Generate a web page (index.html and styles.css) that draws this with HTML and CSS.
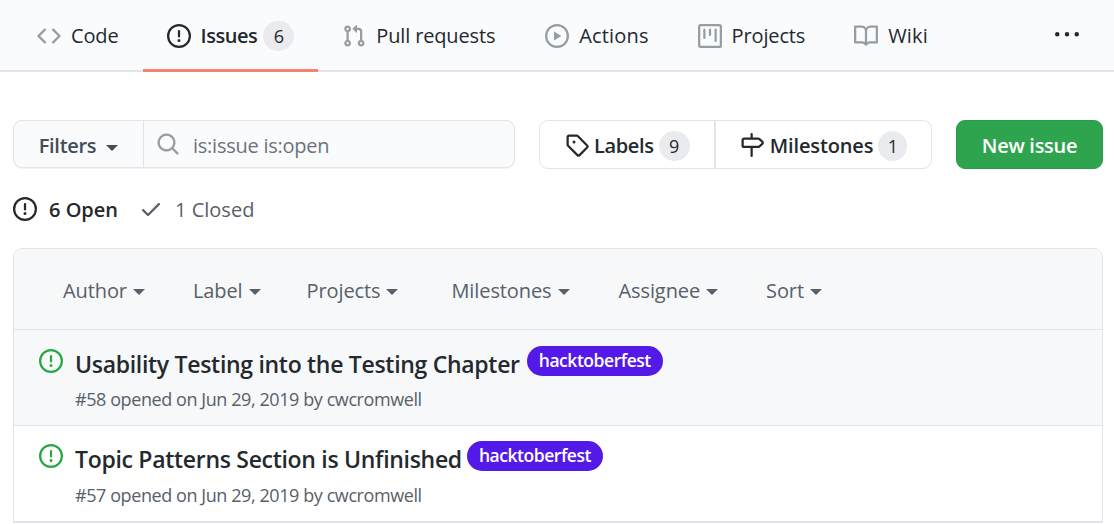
FILE: index.html
```html
<!DOCTYPE html>
<html lang="en">
<head>
    <meta charset="UTF-8">
    <meta name="viewport" content="width=device-width, initial-scale=1.0">
    <title>Issues</title>
    <link rel="stylesheet" href="styles.css">
</head>
<body>
    <svg class="sprite" width="0" height="0">
        <symbol id="i-code" viewBox="0 0 16 16"><path d="M4.72 3.22a.75.75 0 011.06 1.06L2.06 8l3.72 3.72a.75.75 0 11-1.06 1.06L.47 8.53a.75.75 0 010-1.06l4.25-4.25zm6.56 0a.75.75 0 10-1.06 1.06L13.94 8l-3.72 3.72a.75.75 0 101.06 1.06l4.25-4.25a.75.75 0 000-1.06l-4.25-4.25z"/></symbol>
        <symbol id="i-issue" viewBox="0 0 16 16"><path d="M8 1.5a6.5 6.5 0 100 13 6.5 6.5 0 000-13zM0 8a8 8 0 1116 0A8 8 0 010 8zm9 3a1 1 0 11-2 0 1 1 0 012 0zm-.25-6.25a.75.75 0 00-1.5 0v3.5a.75.75 0 001.5 0v-3.5z"/></symbol>
        <symbol id="i-pull" viewBox="0 0 16 16"><path d="M7.177 3.073L9.573.677A.25.25 0 0110 .854v4.792a.25.25 0 01-.427.177L7.177 3.427a.25.25 0 010-.354zM3.75 2.5a.75.75 0 100 1.5.75.75 0 000-1.5zm-2.25.75a2.25 2.25 0 113 2.122v5.256a2.251 2.251 0 11-1.5 0V5.372A2.25 2.25 0 011.5 3.25zM11 2.5h-1V4h1a1 1 0 011 1v5.628a2.251 2.251 0 101.5 0V5A2.5 2.5 0 0011 2.5zm1 10.25a.75.75 0 111.5 0 .75.75 0 01-1.5 0zM3.75 12a.75.75 0 100 1.5.75.75 0 000-1.5z"/></symbol>
        <symbol id="i-play" viewBox="0 0 16 16"><path d="M1.5 8a6.5 6.5 0 1113 0 6.5 6.5 0 01-13 0zM8 0a8 8 0 100 16A8 8 0 008 0zM6.379 5.227A.25.25 0 006 5.442v5.117a.25.25 0 00.379.214l4.264-2.559a.25.25 0 000-.428L6.379 5.227z"/></symbol>
        <symbol id="i-project" viewBox="0 0 16 16"><path d="M1.75 0A1.75 1.75 0 000 1.75v12.5C0 15.216.784 16 1.75 16h12.5A1.75 1.75 0 0016 14.25V1.75A1.75 1.75 0 0014.25 0H1.75zM1.5 1.75a.25.25 0 01.25-.25h12.5a.25.25 0 01.25.25v12.5a.25.25 0 01-.25.25H1.75a.25.25 0 01-.25-.25V1.75zM11.75 3a.75.75 0 00-.75.75v7.5a.75.75 0 001.5 0v-7.5a.75.75 0 00-.75-.75zm-8.25.75a.75.75 0 011.5 0v5.5a.75.75 0 01-1.5 0v-5.5zM8 3a.75.75 0 00-.75.75v3.5a.75.75 0 001.5 0v-3.5A.75.75 0 008 3z"/></symbol>
        <symbol id="i-book" viewBox="0 0 16 16"><path d="M0 1.75A.75.75 0 01.75 1h4.253c1.227 0 2.317.59 3 1.501A3.744 3.744 0 0111.006 1h4.245a.75.75 0 01.75.75v10.5a.75.75 0 01-.75.75h-4.507a2.25 2.25 0 00-1.591.659l-.622.621a.75.75 0 01-1.06 0l-.622-.621A2.25 2.25 0 005.258 13H.75a.75.75 0 01-.75-.75V1.75zm8.755 3a2.25 2.25 0 012.25-2.25H14.5v9h-3.757c-.71 0-1.4.201-1.992.572l.004-7.322zm-1.504 7.324l.004-5.073-.002-2.253A2.25 2.25 0 005.003 2.5H1.5v9h3.757a3.75 3.75 0 011.994.574z"/></symbol>
        <symbol id="i-kebab" viewBox="0 0 16 16"><path d="M8 9a1.5 1.5 0 100-3 1.5 1.5 0 000 3zM1.5 9a1.5 1.5 0 100-3 1.5 1.5 0 000 3zm13 0a1.5 1.5 0 100-3 1.5 1.5 0 000 3z"/></symbol>
        <symbol id="i-search" viewBox="0 0 16 16"><path d="M11.5 7a4.499 4.499 0 11-8.998 0A4.499 4.499 0 0111.5 7zm-.82 4.74a6 6 0 111.06-1.06l3.04 3.04a.75.75 0 11-1.06 1.06l-3.04-3.04z"/></symbol>
        <symbol id="i-tag" viewBox="0 0 16 16"><path d="M2.5 7.775V2.75a.25.25 0 01.25-.25h5.025a.25.25 0 01.177.073l6.25 6.25a.25.25 0 010 .354l-5.025 5.025a.25.25 0 01-.354 0l-6.25-6.25a.25.25 0 01-.073-.177zm-1.5 0V2.75C1 1.784 1.784 1 2.75 1h5.025c.464 0 .91.184 1.238.513l6.25 6.25a1.75 1.75 0 010 2.474l-5.026 5.026a1.75 1.75 0 01-2.474 0l-6.25-6.25A1.75 1.75 0 011 7.775zM6 5a1 1 0 100 2 1 1 0 000-2z"/></symbol>
        <symbol id="i-milestone" viewBox="0 0 16 16"><path d="M7.75 0a.75.75 0 01.75.75V3h3.634c.414 0 .814.147 1.13.414l2.07 1.75a1.75 1.75 0 010 2.672l-2.07 1.75a1.75 1.75 0 01-1.13.414H8.5v5.25a.75.75 0 11-1.5 0V10H2.75A1.75 1.75 0 011 8.25v-3.5C1 3.784 1.784 3 2.75 3H7V.75A.75.75 0 017.75 0zm0 8.5h4.384a.25.25 0 00.161-.06l2.07-1.75a.25.25 0 000-.38l-2.07-1.75a.25.25 0 00-.161-.06H2.75a.25.25 0 00-.25.25v3.5c0 .138.112.25.25.25h5z"/></symbol>
        <symbol id="i-check" viewBox="0 0 16 16"><path d="M13.78 4.22a.75.75 0 010 1.06l-7.25 7.25a.75.75 0 01-1.06 0L2.22 9.28a.75.75 0 011.06-1.06L6 10.94l6.72-6.72a.75.75 0 011.06 0z"/></symbol>
    </svg>

    <nav class="tabs">
        <a class="tab"><svg class="icon"><use href="#i-code"/></svg>Code</a>
        <a class="tab active"><svg class="icon"><use href="#i-issue"/></svg>Issues<span class="counter">6</span></a>
        <a class="tab"><svg class="icon"><use href="#i-pull"/></svg>Pull requests</a>
        <a class="tab wide"><svg class="icon"><use href="#i-play"/></svg>Actions</a>
        <a class="tab"><svg class="icon"><use href="#i-project"/></svg>Projects</a>
        <a class="tab wide"><svg class="icon"><use href="#i-book"/></svg>Wiki</a>
        <svg class="icon kebab"><use href="#i-kebab"/></svg>
    </nav>

    <main>
        <div class="toolbar">
            <div class="filter-box">
                <button class="filter-btn">Filters<span class="caret"></span></button>
                <div class="search">
                    <svg class="icon"><use href="#i-search"/></svg>
                    <span>is:issue is:open</span>
                </div>
            </div>
            <div class="links">
                <a class="link"><svg class="icon"><use href="#i-tag"/></svg>Labels<span class="counter">9</span></a>
                <a class="link"><svg class="icon"><use href="#i-milestone"/></svg>Milestones<span class="counter">1</span></a>
            </div>
            <button class="new-issue">New issue</button>
        </div>

        <div class="states">
            <a class="state open"><svg class="icon"><use href="#i-issue"/></svg>6 Open</a>
            <a class="state"><svg class="icon"><use href="#i-check"/></svg>1 Closed</a>
        </div>

        <section class="box">
            <div class="box-header">
                <span class="sel">Author<span class="caret"></span></span>
                <span class="sel label">Label<span class="caret"></span></span>
                <span class="sel projects">Projects<span class="caret"></span></span>
                <span class="sel milestones">Milestones<span class="caret"></span></span>
                <span class="sel">Assignee<span class="caret"></span></span>
                <span class="sel">Sort<span class="caret"></span></span>
            </div>
            <div class="row hover">
                <svg class="icon green"><use href="#i-issue"/></svg>
                <div>
                    <div class="title-line"><a class="title">Usability Testing into the Testing Chapter</a><span class="tag">hacktoberfest</span></div>
                    <div class="meta">#58 opened on Jun 29, 2019 by cwcromwell</div>
                </div>
            </div>
            <div class="row">
                <svg class="icon green"><use href="#i-issue"/></svg>
                <div>
                    <div class="title-line"><a class="title">Topic Patterns Section is Unfinished</a><span class="tag">hacktoberfest</span></div>
                    <div class="meta">#57 opened on Jun 29, 2019 by cwcromwell</div>
                </div>
            </div>
        </section>
    </main>
</body>
</html>
```

FILE: styles.css
```css
html, body{
    margin: 0;
    height: 524px;
    overflow: hidden;
}
body{
    font-family: "Open Sans", "Noto Sans", sans-serif;
    font-size: 20px;
    color: #24292e;
    background-color: #fff;
}
.sprite{
    display: block;
}
.icon{
    width: 24px;
    height: 24px;
    fill: currentColor;
    fill-rule: evenodd;
    flex: none;
}
.counter{
    display: inline-flex;
    align-items: center;
    justify-content: center;
    min-width: 31px;
    height: 30px;
    padding: 0 1px;
    border-radius: 15px;
    background-color: #e9ebee;
    font-size: 18px;
    font-weight: 500;
    color: #24292e;
    box-sizing: border-box;
}
.caret{
    display: inline-block;
    border: 6px solid transparent;
    border-top-color: currentColor;
    border-bottom: 0;
    margin-left: 6px;
    vertical-align: 3px;
}

/* top tabs */
.tabs{
    display: flex;
    align-items: center;
    height: 70px;
    padding-left: 13px;
    background-color: #fafbfc;
    border-bottom: 2px solid #e1e4e8;
}
.tab{
    display: flex;
    align-items: center;
    height: 72px;
    margin-bottom: -2px;
    padding: 2px 24px 0;
    box-sizing: border-box;
    border-bottom: 3px solid transparent;
    letter-spacing: -.15px;
}
.tab.wide{
    letter-spacing: .15px;
}
.tab .icon{
    margin-right: 10px;
    color: #959da5;
}
.tab.active{
    font-weight: 600;
    letter-spacing: -.45px;
    border-bottom-color: #f9826c;
}
.tab.active + .tab{
    padding-right: 25px;
}
.tab.active + .tab ~ .tab{
    margin-left: 1px;
}
.tab.active .icon{
    color: #24292e;
}
.tab .counter{
    margin-left: 6px;
    letter-spacing: 0;
}
.tabs .kebab{
    margin-left: auto;
    margin-right: 35px;
    color: #24292e;
}

main{
    padding: 48px 11px 0 13px;
}

/* filter row */
.toolbar{
    display: flex;
    height: 49px;
}
.filter-box{
    display: flex;
    width: 502px;
    height: 48px;
    box-sizing: border-box;
    border: 1px solid #e1e4e8;
    border-radius: 9px;
    background-color: #fafbfc;
    box-shadow: 0 1px 1px rgba(27, 31, 35, .06);
}
.filter-btn{
    width: 130px;
    padding: 2px 0 0;
    border: 0;
    border-right: 1px solid #e1e4e8;
    background: none;
    font: inherit;
    font-weight: 600;
    color: #444d56;
    letter-spacing: -.3px;
}
.filter-btn .caret{
    margin-left: 10px;
    vertical-align: 2px;
}
.search{
    display: flex;
    align-items: center;
    padding: 2px 0 0 12px;
    color: #6a737d;
    letter-spacing: -.25px;
}
.search .icon{
    margin-right: 13px;
    margin-top: -2px;
    color: #959da5;
}
.links{
    display: flex;
    margin-left: 24px;
    width: 393px;
    box-sizing: border-box;
    border: 1px solid #e1e4e8;
    border-radius: 9px;
}
.link{
    display: flex;
    align-items: center;
    padding: 2px 24px 0 25px;
    font-weight: 600;
    letter-spacing: -.35px;
}
.link + .link{
    padding-left: 24px;
    letter-spacing: -.12px;
    border-left: 2px solid #e1e4e8;
}
.link .icon{
    margin-right: 5px;
    margin-top: -2px;
}
.link + .link .icon{
    margin-right: 6px;
}
.link .counter{
    margin-left: 5px;
    letter-spacing: 0;
}
.link + .link .counter{
    min-width: 29px;
}
.new-issue{
    margin-left: auto;
    width: 147px;
    padding: 2px 0 0;
    border: 1px solid #2b9a4a;
    border-radius: 9px;
    background-color: #2ea44f;
    color: #fff;
    font: inherit;
    font-weight: 600;
    letter-spacing: -.3px;
}

/* open / closed */
.states{
    display: flex;
    align-items: center;
    height: 30px;
    margin-top: 25px;
}
.state{
    display: flex;
    align-items: center;
    margin-right: 21px;
    color: #586069;
}
.state .icon{
    margin-right: 12px;
}
.state.open{
    font-weight: 600;
    color: #24292e;
}

/* issue list */
.box{
    margin-top: 24px;
    border: 1px solid #e1e4e8;
    border-top-left-radius: 9px;
    border-top-right-radius: 9px;
}
.box-header{
    display: flex;
    align-items: center;
    height: 81px;
    padding: 3px 0 0 49px;
    box-sizing: border-box;
    background-color: #f6f8fa;
    border-bottom: 1px solid #e1e4e8;
    border-radius: 9px 9px 0 0;
    color: #586069;
    letter-spacing: -.1px;
}
.sel{
    margin-right: 48px;
}
.sel.label{
    margin-right: 46px;
}
.sel.projects{
    margin-right: 53px;
}
.sel.milestones{
    margin-right: 49px;
}
.sel .caret{
    margin-left: 6px;
}
.row{
    display: flex;
    height: 96px;
    padding: 19px 0 0 25px;
    box-sizing: border-box;
    border-bottom: 1px solid #e1e4e8;
}
.row + .row{
    padding-top: 18px;
}
.row + .row .meta{
    margin-top: 8px;
}
.row.hover{
    background-color: #f6f8fa;
}
.row .green{
    color: #28a745;
    margin-right: 12px;
}
.title-line{
    display: flex;
    align-items: flex-start;
}
.title{
    font-size: 23px;
    font-weight: 600;
    line-height: 31px;
    letter-spacing: -.3px;
}
.tag{
    display: inline-block;
    height: 30px;
    line-height: 29px;
    margin: -3px 0 0 5px;
    padding: 0 12px;
    border-radius: 15px;
    background-color: #5319e7;
    color: #fff;
    font-size: 17.5px;
    font-weight: 600;
    letter-spacing: -.45px;
}
.row.hover .tag{
    margin-left: 7px;
}
.meta{
    margin-top: 7px;
    font-size: 18px;
    line-height: 24px;
    color: #586069;
    letter-spacing: -.42px;
}
```
